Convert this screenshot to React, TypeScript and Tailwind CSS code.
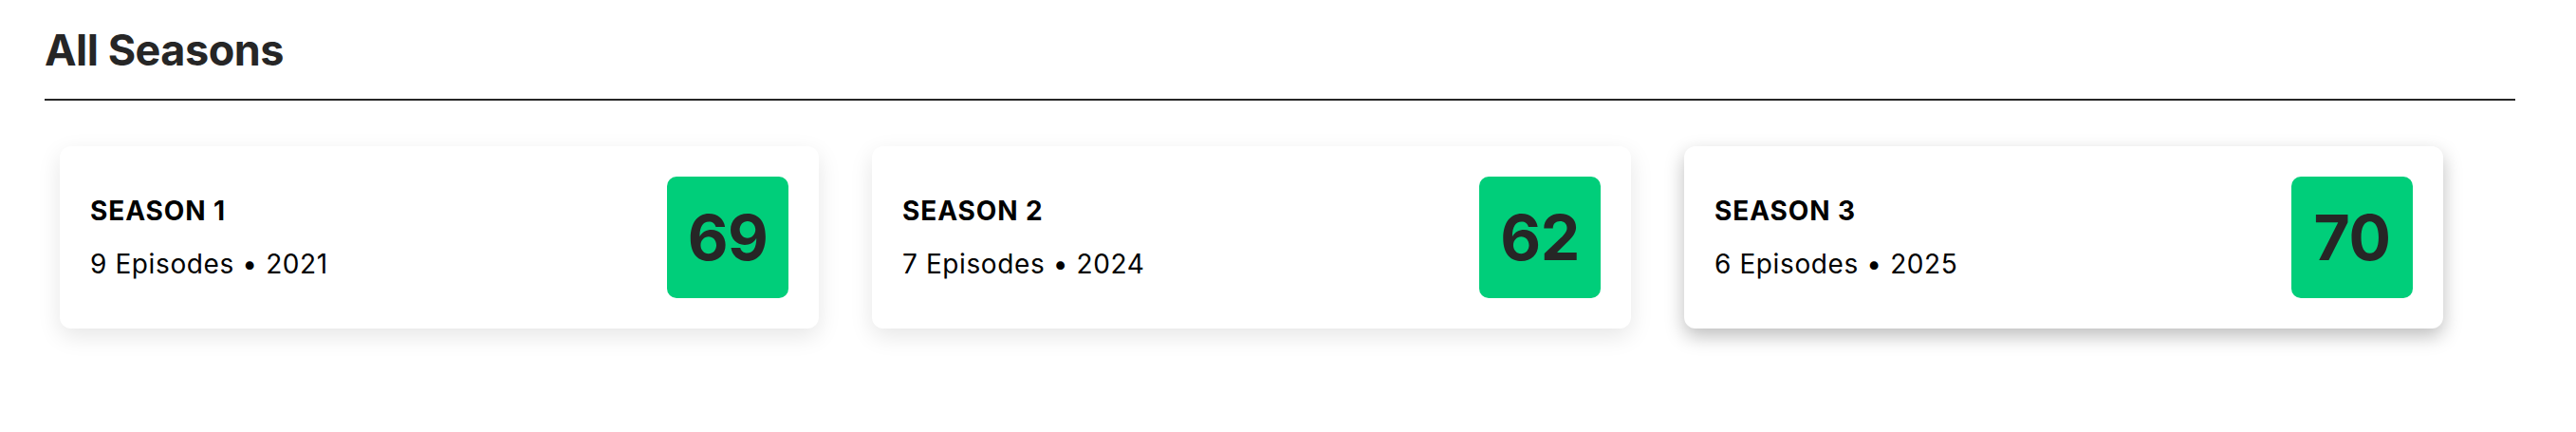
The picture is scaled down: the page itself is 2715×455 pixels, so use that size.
import React from 'react';

type Season = {
  label: string;
  episodes: number;
  year: number;
  score: number;
};

const seasons: Season[] = [
  { label: 'SEASON 1', episodes: 9, year: 2021, score: 69 },
  { label: 'SEASON 2', episodes: 7, year: 2024, score: 62 },
  { label: 'SEASON 3', episodes: 6, year: 2025, score: 70 },
];

const SeasonCard: React.FC<{ season: Season; active?: boolean }> = ({ season, active }) => (
  <div
    className={
      active
        ? 'flex w-[800px] shrink-0 items-center justify-between rounded-xl bg-white p-8 shadow-[0_8px_20px_rgba(0,0,0,0.26)]'
        : 'flex w-[800px] shrink-0 items-center justify-between rounded-xl bg-white p-8 shadow-[0_8px_24px_rgba(0,0,0,0.1)]'
    }
  >
    <div className="flex flex-col gap-[20px] text-black">
      <div className="text-[28px] font-bold leading-[36px] tracking-[0.9px]">{season.label}</div>
      <div className="text-[28px] leading-[36px] tracking-[0.6px]">
        {season.episodes} Episodes • {season.year}
      </div>
    </div>
    <div className="flex h-[128px] w-[128px] items-center justify-center rounded-[10px] bg-[#00ce7a] text-[66px] font-bold tracking-[-0.5px] text-[#262626]">
      {season.score}
    </div>
  </div>
);

export default function App() {
  return (
    <div className="min-h-[455px] bg-white pl-[47px] pt-[25px] font-['Inter','Liberation_Sans',sans-serif]">
      <div className="w-[2604px] border-b-2 border-[#262626] pb-[23px]">
        <h2 className="text-[45px] font-bold leading-[56px] tracking-[-0.5px] text-[#262626]">All Seasons</h2>
      </div>
      <div className="mt-[48px] flex gap-[56px] pl-4">
        {seasons.map((s, i) => (
          <SeasonCard key={s.label} season={s} active={i === 2} />
        ))}
      </div>
    </div>
  );
}
